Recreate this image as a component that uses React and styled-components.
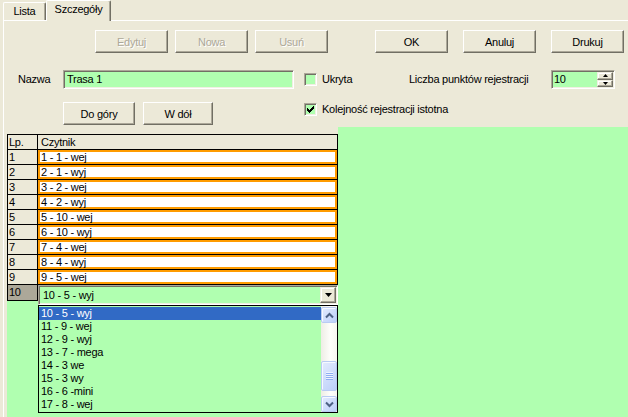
import React from 'react';
import styled, { createGlobalStyle } from 'styled-components';

const GREEN = '#b0ffb0';
const FACE = '#ece9d8';
const DARK = '#716f64';
const SHADOW = '#aca899';
const LIGHT = '#f1efe2';
const ORANGE = '#ff9c00';

const Global = createGlobalStyle`
  html, body { margin: 0; padding: 0; background: ${FACE}; }
  body { font-family: "Liberation Sans", Arial, sans-serif; font-size: 11px; letter-spacing: -0.25px; color: #000; }
  * { box-sizing: border-box; }
`;

const Window = styled.div`
  width: 628px;
  height: 417px;
  overflow: hidden;
  background: ${FACE};
  display: flex;
  flex-direction: column;
`;

const TabStrip = styled.div`
  flex: none;
  display: flex;
  align-items: flex-end;
  height: 20px;
  padding-left: 3px;
  position: relative;
  z-index: 2;
`;

const Tab = styled.div`
  width: ${p => p.$w}px;
  height: ${p => (p.$active ? 21 : 18)}px;
  margin-bottom: ${p => (p.$active ? -1 : 0)}px;
  background: ${FACE};
  border-top: 1px solid #fff;
  border-left: 1px solid #fff;
  border-right: 1px solid ${DARK};
  box-shadow: inset -1px 0 0 ${SHADOW};
  border-radius: 2px 2px 0 0;
  text-align: center;
  line-height: ${p => (p.$active ? 17 : 16)}px;
  white-space: nowrap;
`;

const Panel = styled.div`
  flex: 1;
  width: 660px;
  margin-left: 3px;
  border-top: 1px solid #fff;
  border-left: 1px solid #fff;
  display: flex;
  flex-direction: column;
  min-height: 0;
`;

const Toolbar = styled.div`
  display: flex;
  height: 23px;
  margin-top: 9px;
  padding-left: 91px;
`;

const Button = styled.button`
  flex: none;
  width: ${p => p.$w || 73}px;
  height: 23px;
  margin: 0 0 0 ${p => p.$ml || 0}px;
  padding: 0;
  background: ${FACE};
  border: 1px solid;
  border-color: #fff ${DARK} ${DARK} #fff;
  border-radius: 0;
  box-shadow: inset -1px -1px 0 ${SHADOW};
  font: inherit;
  letter-spacing: inherit;
  line-height: 20px;
  color: ${p => (p.disabled ? SHADOW : '#000')};
  text-shadow: ${p => (p.disabled ? '1px 1px 0 #fff' : 'none')};
`;

const FormRow = styled.div`
  display: flex;
  align-items: ${p => p.$align || 'center'};
  height: ${p => p.$h}px;
  margin-top: ${p => p.$mt}px;
`;

const Label = styled.div`
  flex: none;
  width: ${p => (p.$w ? `${p.$w}px` : 'auto')};
  margin-left: ${p => p.$ml || 0}px;
  white-space: nowrap;
  line-height: 13px;
`;

const Sunken = styled.div`
  border: 1px solid;
  border-color: ${SHADOW} #fff #fff ${SHADOW};
  box-shadow: inset 1px 1px 0 ${DARK}, inset -1px -1px 0 ${LIGHT};
  background: ${GREEN};
`;

const TextField = styled(Sunken)`
  flex: none;
  width: 231px;
  height: 19px;
  padding: 1px 3px;
  line-height: 15px;
  white-space: nowrap;
`;

const CheckBox = styled(Sunken)`
  flex: none;
  width: 13px;
  height: 13px;
  margin-left: ${p => p.$ml || 0}px;
  margin-top: ${p => p.$mt || 0}px;
  padding: 1px;
  display: flex;
`;

const CheckWrap = styled.div`
  display: flex;
  align-items: center;
  align-self: ${p => p.$self || 'center'};
  margin-top: ${p => p.$mt || 0}px;
  margin-left: ${p => p.$ml || 0}px;
`;

const Spin = styled(Sunken)`
  flex: none;
  width: 64px;
  height: 19px;
  display: flex;
  padding: 1px;
`;

const SpinText = styled.div`
  flex: 1;
  padding-left: 1px;
  line-height: 15px;
`;

const SpinButtons = styled.div`
  width: 16px;
  display: flex;
  flex-direction: column;
`;

const Raised = styled.div`
  background: ${FACE};
  border: 1px solid;
  border-color: ${LIGHT} ${DARK} ${DARK} ${LIGHT};
  box-shadow: inset -1px -1px 0 ${SHADOW}, inset 1px 1px 0 #fff;
  display: flex;
  align-items: center;
  justify-content: center;
`;

const SpinButton = styled(Raised)`
  flex: 1;
`;

const GreenArea = styled.div`
  flex: 1;
  margin-top: 2px;
  margin-left: 3px;
  background: ${GREEN};
  min-height: 0;
`;

const GridBox = styled.div`
  width: 331px;
  background: ${FACE};
  padding-top: 7px;
`;

const Grid = styled.div`
  display: grid;
  grid-template-columns: 29px 299px;
  grid-template-rows: repeat(10, 14px) 15px;
  gap: 1px;
  background: #000;
  border: 1px solid #000;
`;

const HeadCell = styled.div`
  background: ${FACE};
  padding-left: ${p => p.$pl}px;
  line-height: 14px;
  white-space: nowrap;
`;

const NumCell = styled.div`
  background: ${p => (p.$current ? SHADOW : FACE)};
  padding-left: 1px;
  line-height: ${p => (p.$current ? 15 : 14)}px;
`;

const ReaderCell = styled.div`
  background: #fff;
  border: 2px solid ${ORANGE};
  padding-left: 1px;
  line-height: 10px;
  white-space: nowrap;
`;

const ComboCell = styled.div`
  position: relative;
  z-index: 1;
`;

const Combo = styled(Sunken)`
  width: 300px;
  height: 20px;
  padding: 1px;
  display: flex;
`;

const ComboText = styled.div`
  flex: 1;
  padding-left: 3px;
  line-height: 16px;
  white-space: nowrap;
`;

const DropButton = styled(Raised)`
  width: 16px;
  height: 16px;
`;

const DropList = styled.div`
  position: absolute;
  top: 20px;
  left: 0;
  width: 300px;
  height: 108px;
  border: 1px solid #000;
  background: ${GREEN};
  display: flex;
`;

const Items = styled.div`
  flex: 1;
  padding-top: 1px;
`;

const Item = styled.div`
  height: 13px;
  line-height: 13px;
  padding-left: 2px;
  white-space: nowrap;
  background: ${p => (p.$selected ? '#316ac5' : 'transparent')};
  color: ${p => (p.$selected ? '#fff' : '#000')};
`;

const ScrollBar = styled.div`
  width: 16px;
  display: flex;
  flex-direction: column;
  background: linear-gradient(to right, #eeede5, #fefefb 60%, #f7f6f1);
`;

const XpButton = styled.div`
  flex: none;
  height: ${p => p.$h || 16}px;
  margin-top: ${p => p.$mt || 0}px;
  border: 1px solid #b9cbf3;
  border-radius: 2px;
  background: linear-gradient(135deg, #e3ebfe, #bccffa);
  box-shadow: inset 1px 1px 0 #f6f9ff;
  display: flex;
  align-items: center;
  justify-content: center;
`;

const Track = styled.div`
  flex: 1;
  display: flex;
  flex-direction: column;
`;

const Grip = styled.div`
  width: 7px;
  height: 8px;
  background: repeating-linear-gradient(to bottom, #eef3fe 0 1px, #8eaef2 1px 2px);
`;

function Check() {
  const cols = [2, 3, 4, 3, 2, 1, 0];
  return (
    <svg width="9" height="9" viewBox="0 0 9 9" shapeRendering="crispEdges">
      {cols.map((y, i) => (
        <rect key={i} x={1 + i} y={1 + y} width="1" height="3" fill="#000" />
      ))}
    </svg>
  );
}

function Tri({ up, w = 7, h = 4 }) {
  const pts = up ? `0,${h} ${w},${h} ${w / 2},0` : `0,0 ${w},0 ${w / 2},${h}`;
  return (
    <svg width={w} height={h} viewBox={`0 0 ${w} ${h}`}>
      <polygon points={pts} fill="#000" />
    </svg>
  );
}

function Chevron({ up }) {
  const d = up ? 'M1 5.5 L4.5 2 L8 5.5' : 'M1 1.5 L4.5 5 L8 1.5';
  return (
    <svg width="9" height="7" viewBox="0 0 9 7">
      <path d={d} fill="none" stroke="#4d6185" strokeWidth="2" />
    </svg>
  );
}

const readers = [
  '1 - 1 - wej',
  '2 - 1 - wyj',
  '3 - 2 - wej',
  '4 - 2 - wyj',
  '5 - 10 - wej',
  '6 - 10 - wyj',
  '7 - 4 - wej',
  '8 - 4 - wyj',
  '9 - 5 - wej',
];

const options = [
  '10 - 5 - wyj',
  '11 - 9 - wej',
  '12 - 9 - wyj',
  '13 - 7 - mega',
  '14 - 3 we',
  '15 - 3 wy',
  '16 - 6 -mini',
  '17 - 8 - wej',
];

export default function App() {
  return (
    <Window>
      <Global />
      <TabStrip>
        <Tab $w={43}>Lista</Tab>
        <Tab $w={65} $active>Szczegóły</Tab>
      </TabStrip>
      <Panel>
        <Toolbar>
          <Button disabled>Edytuj</Button>
          <Button disabled $ml={7}>Nowa</Button>
          <Button disabled $ml={7}>Usuń</Button>
          <Button $ml={47}>OK</Button>
          <Button $ml={15}>Anuluj</Button>
          <Button $ml={15}>Drukuj</Button>
        </Toolbar>
        <FormRow $h={19} $mt={17}>
          <Label $w={45} $ml={14}>Nazwa</Label>
          <TextField>Trasa 1</TextField>
          <CheckWrap $ml={10}>
            <CheckBox />
            <Label $w={87} $ml={5}>Ukryta</Label>
          </CheckWrap>
          <Label $w={142}>Liczba punktów rejestracji</Label>
          <Spin>
            <SpinText>10</SpinText>
            <SpinButtons>
              <SpinButton><Tri up w={5} h={3} /></SpinButton>
              <SpinButton><Tri w={5} h={3} /></SpinButton>
            </SpinButtons>
          </Spin>
        </FormRow>
        <FormRow $h={23} $mt={13}>
          <Button $w={72} $ml={59}>Do góry</Button>
          <Button $w={70} $ml={8}>W dół</Button>
          <CheckWrap $ml={91} $self="flex-start" $mt={1}>
            <CheckBox><Check /></CheckBox>
            <Label $ml={5}>Kolejność rejestracji istotna</Label>
          </CheckWrap>
        </FormRow>
        <GreenArea>
          <GridBox>
            <Grid>
              <HeadCell $pl={1}>Lp.</HeadCell>
              <HeadCell $pl={3}>Czytnik</HeadCell>
              {readers.map((r, i) => (
                <React.Fragment key={r}>
                  <NumCell>{i + 1}</NumCell>
                  <ReaderCell>{r}</ReaderCell>
                </React.Fragment>
              ))}
              <NumCell $current>10</NumCell>
              <ComboCell>
                <Combo>
                  <ComboText>10 - 5 - wyj</ComboText>
                  <DropButton><Tri /></DropButton>
                </Combo>
                <DropList>
                  <Items>
                    {options.map((o, i) => (
                      <Item key={o} $selected={i === 0}>{o}</Item>
                    ))}
                  </Items>
                  <ScrollBar>
                    <XpButton $mt={1}><Chevron up /></XpButton>
                    <Track>
                      <XpButton $h={30} style={{ marginTop: 38 }}><Grip /></XpButton>
                    </Track>
                    <XpButton><Chevron /></XpButton>
                  </ScrollBar>
                </DropList>
              </ComboCell>
            </Grid>
          </GridBox>
        </GreenArea>
      </Panel>
    </Window>
  );
}
